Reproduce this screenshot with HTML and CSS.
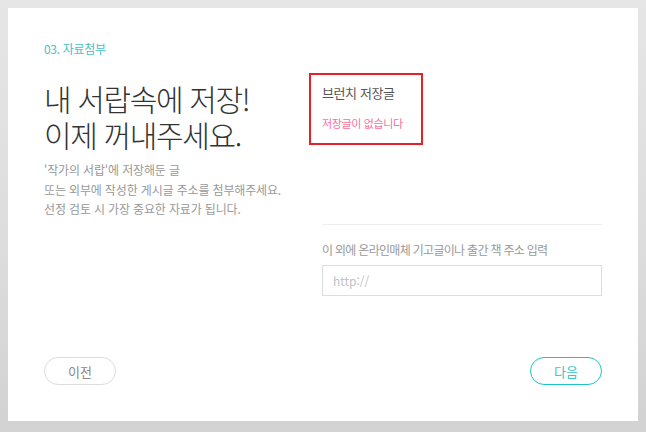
FILE: index.html
```html
<!DOCTYPE html>
<html lang="ko">
<head>
<meta charset="utf-8">
<title>자료첨부</title>
<link rel="stylesheet" href="styles.css">
</head>
<body>
<div class="card">
  <div class="content">
    <div class="left">
      <div class="step">03. 자료첨부</div>
      <h1 class="title"><span class="title-line">내 서랍속에 저장!</span><span class="title-line">이제 꺼내주세요.</span></h1>
      <p class="desc">'작가의 서랍'에 저장해둔 글<br>또는 외부에 작성한 게시글 주소를 첨부해주세요.<br>선정 검토 시 가장 중요한 자료가 됩니다.</p>
    </div>
    <div class="right">
      <div class="saved">
        <div class="saved-title">브런치 저장글</div>
        <div class="saved-empty">저장글이 없습니다</div>
      </div>
      <div class="divider"></div>
      <label class="url-label" for="url">이 외에 온라인매체 기고글이나 출간 책 주소 입력</label>
      <input class="url-input" id="url" type="text" placeholder="http://">
    </div>
  </div>
  <div class="actions">
    <button class="btn btn-prev">이전</button>
    <button class="btn btn-next">다음</button>
  </div>
</div>
</body>
</html>
```
FILE: styles.css
```css
html, body {
  margin: 0;
  padding: 0;
}
body {
  width: 646px;
  height: 432px;
  background: linear-gradient(180deg, #e6e6e6 0%, #dcdcdc 60%, #d2d2d2 100%);
  font-family: "Noto Sans CJK KR", "Noto Sans", sans-serif;
  padding: 8px;
  box-sizing: border-box;
  overflow: hidden;
}
.card {
  width: 630px;
  height: 413px;
  background: #fff;
  box-sizing: border-box;
  padding: 32px 36px 36px 36px;
  display: flex;
  flex-direction: column;
  justify-content: space-between;
}
.content {
  display: flex;
}
.left {
  width: 265px;
}
.step {
  font-size: 12px;
  line-height: 18px;
  color: #45c2c6;
  letter-spacing: -0.3px;
}
.title {
  margin: 22px 0 0 0;
  font-size: 30px;
  line-height: 36px;
  font-weight: 300;
  color: #333;
  letter-spacing: -1.35px;
}
.title-line {
  display: block;
  height: 36px;
}
.desc {
  margin: 8px 0 0 0;
  font-size: 12px;
  line-height: 19.5px;
  color: #999;
  letter-spacing: -0.15px;
}
.right {
  width: 293px;
  padding-top: 33px;
  display: flex;
  flex-direction: column;
}
.saved {
  width: 114px;
  height: 72px;
  box-sizing: border-box;
  border: 2px solid #e52129;
  padding: 9px 0 0 11px;
}
.saved-title {
  font-size: 13px;
  line-height: 18px;
  color: #555;
  letter-spacing: -0.4px;
}
.saved-empty {
  margin-top: 13px;
  font-size: 11px;
  line-height: 16px;
  color: #f7729a;
  letter-spacing: -0.35px;
}
.divider {
  margin: 79px 0 0 13px;
  height: 1px;
  background: #eeeeee;
}
.url-label {
  margin: 16px 0 0 13px;
  font-size: 12px;
  line-height: 18px;
  color: #999;
  letter-spacing: -0.7px;
}
.url-input {
  margin: 6px 0 0 13px;
  width: 280px;
  height: 31px;
  box-sizing: border-box;
  border: 1px solid #dddddd;
  padding: 0 10px;
  font-family: "Noto Sans CJK KR", "Noto Sans", sans-serif;
  font-size: 12px;
  color: #555;
  outline: none;
}
.url-input::placeholder {
  color: #c2c2c2;
}
.actions {
  display: flex;
  justify-content: space-between;
  width: 558px;
}
.btn {
  width: 72px;
  height: 28px;
  border-radius: 14px;
  background: #fff;
  font-family: "Noto Sans CJK KR", "Noto Sans", sans-serif;
  font-size: 13px;
  padding: 0;
  cursor: pointer;
}
.btn-prev {
  border: 1px solid #dddddd;
  color: #888;
}
.btn-next {
  border: 1px solid #1ec3c6;
  color: #3cc4c8;
}
```
